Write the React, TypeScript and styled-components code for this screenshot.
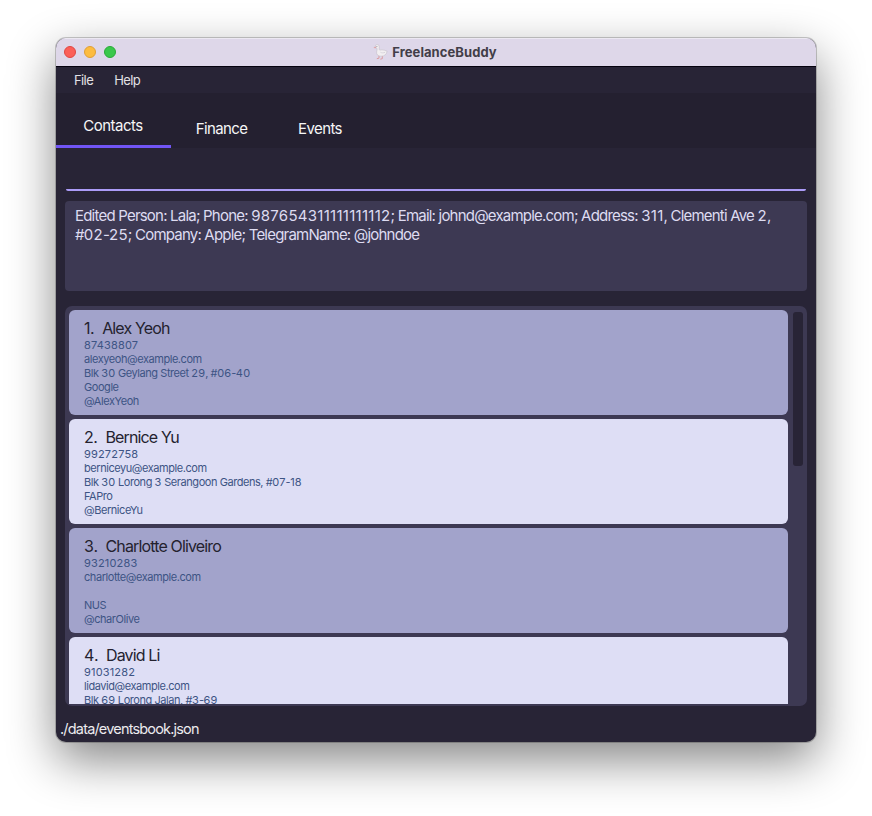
import React from 'react';
import styled, { createGlobalStyle } from 'styled-components';

const GlobalStyle = createGlobalStyle`
  *, *::before, *::after { box-sizing: border-box; }
  html, body { margin: 0; background: #fff; }
  body {
    height: 816px;
    overflow: hidden;
    font-family: Inter, "Liberation Sans", sans-serif;
    white-space: pre;
  }
`;

const Desktop = styled.div`
  width: 872px;
  height: 816px;
  padding: 38px 56px 0;
  overflow: hidden;
`;

const Window = styled.main`
  width: 760px;
  height: 704px;
  border-radius: 10px;
  overflow: hidden;
  display: flex;
  flex-direction: column;
  background: #282436;
  box-shadow: 0 0 0 1px rgba(0, 0, 0, 0.2), 0 18px 48px rgba(0, 0, 0, 0.48);
`;

const TitleBar = styled.header`
  height: 29px;
  flex: none;
  display: grid;
  grid-template-columns: 1fr auto 1fr;
  align-items: center;
  padding: 0 10px 0 8px;
  background: #ded7e9;
  border-bottom: 1px solid #05020f;
  box-shadow: inset 0 1px 0 #ece8f2;
`;

const Lights = styled.div`
  display: flex;
  gap: 8px;
`;

const Light = styled.span<{ $fill: string; $rim: string }>`
  width: 12px;
  height: 12px;
  border-radius: 50%;
  background: ${(p) => p.$fill};
  border: 1px solid ${(p) => p.$rim};
`;

const Title = styled.h1`
  margin: 0;
  display: flex;
  align-items: center;
  gap: 4px;
  font-size: 13px;
  line-height: 16px;
  font-weight: 700;
  letter-spacing: 0.07px;
  color: #423e48;
`;

const MenuBar = styled.nav`
  height: 26px;
  flex: none;
  display: flex;
  gap: 21px;
  padding: 5px 18px 0;
  font-size: 13px;
  line-height: 17px;
  letter-spacing: -0.6px;
  color: #e2e1e5;
`;

const TabBar = styled.nav`
  height: 55px;
  flex: none;
  display: flex;
  background: #242030;
  font-size: 15px;
  line-height: 20px;
  letter-spacing: -0.58px;
  color: #f6f6f7;
`;

const Tab = styled.div<{ $width: number; $active?: boolean }>`
  width: ${(p) => p.$width}px;
  padding-top: ${(p) => (p.$active ? 23 : 26)}px;
  padding-right: 1px;
  text-align: center;
  letter-spacing: ${(p) => (p.$active ? -0.5 : -0.6)}px;
  border-bottom: ${(p) => (p.$active ? '3px solid #7155f5' : 'none')};
`;

const CommandField = styled.div`
  height: 43px;
  flex: none;
  margin: 0 10px;
  border-bottom: 2px solid #ac9cf8;
  border-radius: 2px;
`;

const Digits = styled.span`
  letter-spacing: 0.17px;
`;

const ResultPanel = styled.section`
  height: 90px;
  flex: none;
  margin: 10px 9px 15px;
  padding: 5px 10px;
  border-radius: 4px;
  background: #3d3953;
  color: #dedcf1;
  font-size: 15px;
  line-height: 19px;
  letter-spacing: -0.79px;

  ${Digits} {
    letter-spacing: 0.28px;
  }
`;

const ListPanel = styled.section`
  height: 400px;
  flex: none;
  margin: 0 9px;
  padding: 4px 4px 2px;
  display: flex;
  gap: 5px;
  border-radius: 7px;
  background: #3d3953;
`;

const CardList = styled.div`
  width: 719px;
  overflow: hidden;
  display: flex;
  flex-direction: column;
  gap: 4px;
`;

const Card = styled.article<{ $light: boolean }>`
  height: 105px;
  flex: none;
  padding: 8px 15px;
  border-radius: 6px;
  background: ${(p) => (p.$light ? '#dedef5' : '#a2a3cb')};
`;

const CardName = styled.h2`
  margin: 0;
  display: flex;
  gap: 8.3px;
  font-size: 16px;
  line-height: 20px;
  font-weight: 400;
  letter-spacing: -0.86px;
  color: #24222f;

  ${Digits} {
    letter-spacing: -0.4px;
  }
`;

const CardLine = styled.div`
  height: 14px;
  font-size: 11px;
  line-height: 14px;
  letter-spacing: -0.44px;
  color: #3d5484;
`;

const ScrollThumb = styled.div`
  width: 10px;
  height: 154px;
  margin-top: 2px;
  border-radius: 3px;
  background: #282436;
`;

const StatusBar = styled.footer`
  padding: 13px 4px 0;
  font-size: 14.5px;
  line-height: 20px;
  letter-spacing: -0.82px;
  color: #ecebee;
`;

/* Letters are tracked tightly; runs of digits keep a looser spacing. */
const MixedText = ({ text }: { text: string }) => (
  <>
    {text.split(/(\d+)/).map((part, i) => (i % 2 ? <Digits key={i}>{part}</Digits> : part))}
  </>
);

const Goose = () => (
  <svg width="15" height="16" viewBox="0 0 15 16" aria-hidden="true">
    <path d="M6 11.4v2.8l-2.2.5M9.3 11.5v3.2l-2 .5" fill="none" stroke="#dc9c9f" strokeWidth="1" />
    <path
      d="M2.1 3C2.1 1.5 3 .6 4.2.6c1.4 0 2.1 1 2.1 2.4 0 1.6-.4 2.5.4 3.1 1.9-.5 4.1-.3 7.4 1.1-.4 3.1-2.6 5-5.9 5-3.2 0-4.9-1.6-4.6-4.2.2-1.7.8-2.6.3-4z"
      fill="#f2eff1"
      stroke="#c5c0ca"
      strokeWidth=".6"
    />
    <path d="M7.4 8.2c1.4.9 3.2.8 4.6.1" fill="none" stroke="#cdc8d1" strokeWidth=".7" />
    <path d="M2.5 2.6.4 3.9l2.7.4z" fill="#dc9c9f" />
    <circle cx="3.9" cy="2.4" r=".5" fill="#8a858f" />
  </svg>
);

const people = [
  { name: 'Alex Yeoh', lines: ['87438807', 'alexyeoh@example.com', 'Blk 30 Geylang Street 29, #06-40', 'Google', '@AlexYeoh'] },
  { name: 'Bernice Yu', lines: ['99272758', 'berniceyu@example.com', 'Blk 30 Lorong 3 Serangoon Gardens, #07-18', 'FAPro', '@BerniceYu'] },
  { name: 'Charlotte Oliveiro', lines: ['93210283', 'charlotte@example.com', '', 'NUS', '@charOlive'] },
  { name: 'David Li', lines: ['91031282', 'lidavid@example.com', 'Blk 69 Lorong Jalan, #3-69'] },
];

const result =
  'Edited Person: Lala; Phone: 987654311111111112; Email: johnd@example.com; Address: 311, Clementi Ave 2,\n' +
  '#02-25; Company: Apple; TelegramName: @johndoe';

export default function App() {
  return (
    <>
      <GlobalStyle />
      <Desktop>
        <Window>
          <TitleBar>
            <Lights>
              <Light $fill="#fb5f58" $rim="#df4742" />
              <Light $fill="#fdbc40" $rim="#df9f36" />
              <Light $fill="#3ac84c" $rim="#2aaa38" />
            </Lights>
            <Title>
              <Goose />
              FreelanceBuddy
            </Title>
          </TitleBar>
          <MenuBar>
            <span>File</span>
            <span>Help</span>
          </MenuBar>
          <TabBar>
            <Tab $width={115} $active>Contacts</Tab>
            <Tab $width={102}>Finance</Tab>
            <Tab $width={95}>Events</Tab>
          </TabBar>
          <CommandField />
          <ResultPanel>
            <MixedText text={result} />
          </ResultPanel>
          <ListPanel>
            <CardList>
              {people.map((person, i) => (
                <Card key={person.name} $light={i % 2 === 1}>
                  <CardName>
                    <span>
                      <MixedText text={`${i + 1}.`} />
                    </span>
                    <span>{person.name}</span>
                  </CardName>
                  {person.lines.map((line, n) => (
                    <CardLine key={n}>
                      <MixedText text={line} />
                    </CardLine>
                  ))}
                </Card>
              ))}
            </CardList>
            <ScrollThumb />
          </ListPanel>
          <StatusBar>./data/eventsbook.json</StatusBar>
        </Window>
      </Desktop>
    </>
  );
}
